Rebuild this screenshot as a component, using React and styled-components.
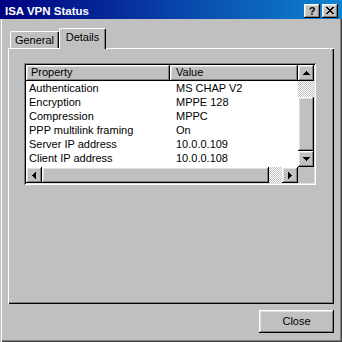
import React from 'react';
import styled, { createGlobalStyle } from 'styled-components';

const Global = createGlobalStyle`
  html, body { margin: 0; padding: 0; background: #c0c0c0; }
  body { font-family: "Liberation Sans", Arial, sans-serif; font-size: 11px; color: #000; }
  * { box-sizing: border-box; }
`;

const raised = `
  box-shadow: inset -1px -1px #000, inset 1px 1px #fff, inset -2px -2px #808080, inset 2px 2px #dfdfdf;
`;

const Window = styled.div`
  width: 342px;
  height: 342px;
  display: flex;
  flex-direction: column;
  background: #c0c0c0;
  box-shadow: inset 1px 0 #c0c0c0, inset 2px 0 #fff, inset -1px -1px #404040, inset -2px -2px #808080;
`;

const TitleBar = styled.div`
  height: 19px;
  display: flex;
  align-items: flex-end;
  justify-content: space-between;
  padding: 0 4px 1px 5px;
  background: linear-gradient(to right, #000080, #1084d0);
`;

const Title = styled.div`
  color: #fff;
  font-weight: bold;
  font-size: 11.5px;
  line-height: 14px;
`;

const TitleButtons = styled.div`
  display: flex;
  gap: 2px;
`;

const TitleButton = styled.div`
  width: 16px;
  height: 14px;
  background: #c0c0c0;
  ${raised}
  display: flex;
  align-items: center;
  justify-content: center;
  font-weight: bold;
  font-size: 11px;
  line-height: 12px;
  padding-bottom: 1px;
`;

const Body = styled.div`
  flex: 1;
  display: flex;
  flex-direction: column;
  padding: 9px 8px 0 8px;
`;

const TabStrip = styled.div`
  display: flex;
  align-items: flex-end;
  height: 20px;
  padding-left: 2px;
`;

const Tab = styled.div`
  position: relative;
  z-index: 1;
  width: ${(p) => p.$w}px;
  height: ${(p) => (p.$active ? 21 : 17)}px;
  margin-bottom: ${(p) => (p.$active ? -1 : 0)}px;
  background: #c0c0c0;
  border-top: 1px solid #fff;
  border-left: 1px solid #fff;
  border-right: 1px solid #000;
  border-radius: 2px 2px 0 0;
  box-shadow: inset -1px 0 #808080;
  text-align: center;
  padding-top: 2px;
  line-height: 13px;
`;

const Panel = styled.div`
  height: 256px;
  background: #c0c0c0;
  box-shadow: inset 1px 1px #fff, inset -1px -1px #000, inset -2px -2px #808080;
  padding: 15px 0 0 16px;
`;

const ListView = styled.div`
  width: 292px;
  height: 122px;
  padding: 2px;
  background: #fff;
  box-shadow: inset 1px 1px #808080, inset -1px -1px #fff, inset 2px 2px #000, inset -2px -2px #dfdfdf;
  display: grid;
  grid-template-columns: 1fr 16px;
  grid-template-rows: 1fr 16px;
`;

const Content = styled.div`
  overflow: hidden;
  background: #fff;
`;

const HeaderRow = styled.div`
  display: grid;
  grid-template-columns: 144px 1fr;
  height: 16px;
`;

const HeaderCell = styled.div`
  background: #c0c0c0;
  ${raised}
  padding-left: ${(p) => p.$pad}px;
  line-height: 15px;
`;

const Row = styled.div`
  display: grid;
  grid-template-columns: 144px 1fr;
  height: 14px;
  line-height: 14px;
`;

const Cell = styled.div`
  padding-left: ${(p) => p.$pad}px;
  white-space: nowrap;
`;

const VScroll = styled.div`
  display: flex;
  flex-direction: column;
  background: #c0c0c0;
`;

const HScroll = styled.div`
  display: flex;
  background: #c0c0c0;
`;

const ArrowButton = styled.div`
  width: 16px;
  height: 16px;
  flex: none;
  background: #c0c0c0;
  ${raised}
  display: flex;
  align-items: center;
  justify-content: center;
`;

const Track = styled.div`
  flex: ${(p) => (p.$size ? 'none' : '1')};
  ${(p) => (p.$vertical ? 'height' : 'width')}: ${(p) => (p.$size ? `${p.$size}px` : 'auto')};
  background: repeating-conic-gradient(#c0c0c0 0 25%, #fff 0 50%) 0 0 / 2px 2px;
`;

const Thumb = styled.div`
  flex: ${(p) => (p.$size ? 'none' : '1')};
  ${(p) => (p.$vertical ? 'height' : 'width')}: ${(p) => (p.$size ? `${p.$size}px` : 'auto')};
  background: #c0c0c0;
  ${raised}
`;

const Corner = styled.div`
  background: #c0c0c0;
`;

const Footer = styled.div`
  display: flex;
  justify-content: flex-end;
  padding-top: 6px;
`;

const Button = styled.div`
  width: 75px;
  height: 23px;
  background: #c0c0c0;
  ${raised}
  display: flex;
  align-items: center;
  justify-content: center;
  line-height: 13px;
`;

const Arrow = ({ dir }) => {
  const vertical = dir === 'up' || dir === 'down';
  if (vertical) {
    const d = dir === 'up'
      ? 'M3 0h1v1h-1zM2 1h3v1h-3zM1 2h5v1h-5zM0 3h7v1h-7z'
      : 'M0 0h7v1h-7zM1 1h5v1h-5zM2 2h3v1h-3zM3 3h1v1h-1z';
    return (
      <svg width="7" height="4" viewBox="0 0 7 4" shapeRendering="crispEdges">
        <path d={d} fill="#000" />
      </svg>
    );
  }
  const d = dir === 'left'
    ? 'M0 3h1v1h-1zM1 2h1v3h-1zM2 1h1v5h-1zM3 0h1v7h-1z'
    : 'M0 0h1v7h-1zM1 1h1v5h-1zM2 2h1v3h-1zM3 3h1v1h-1z';
  return (
    <svg width="4" height="7" viewBox="0 0 4 7" shapeRendering="crispEdges">
      <path d={d} fill="#000" />
    </svg>
  );
};

const CloseGlyph = () => (
  <svg width="8" height="7" viewBox="0 0 8 7" shapeRendering="crispEdges">
    <path
      d="M0 0h2v1h-2zM6 0h2v1h-2zM1 1h2v1h-2zM5 1h2v1h-2zM2 2h4v1h-4zM3 3h2v1h-2zM2 4h4v1h-4zM1 5h2v1h-2zM5 5h2v1h-2zM0 6h2v1h-2zM6 6h2v1h-2z"
      fill="#000"
    />
  </svg>
);

const rows = [
  ['Authentication', 'MS CHAP V2'],
  ['Encryption', 'MPPE 128'],
  ['Compression', 'MPPC'],
  ['PPP multilink framing', 'On'],
  ['Server IP address', '10.0.0.109'],
  ['Client IP address', '10.0.0.108'],
];

export default function App() {
  return (
    <>
      <Global />
      <Window>
        <TitleBar>
          <Title>ISA VPN Status</Title>
          <TitleButtons>
            <TitleButton>?</TitleButton>
            <TitleButton>
              <CloseGlyph />
            </TitleButton>
          </TitleButtons>
        </TitleBar>
        <Body>
          <TabStrip>
            <Tab $w={49}>General</Tab>
            <Tab $w={47} $active>Details</Tab>
          </TabStrip>
          <Panel>
            <ListView>
              <Content>
                <HeaderRow>
                  <HeaderCell $pad={5}>Property</HeaderCell>
                  <HeaderCell $pad={6}>Value</HeaderCell>
                </HeaderRow>
                {rows.map(([k, v]) => (
                  <Row key={k}>
                    <Cell $pad={3}>{k}</Cell>
                    <Cell $pad={6}>{v}</Cell>
                  </Row>
                ))}
              </Content>
              <VScroll>
                <ArrowButton><Arrow dir="up" /></ArrowButton>
                <Track $vertical $size={16} />
                <Thumb $vertical />
                <ArrowButton><Arrow dir="down" /></ArrowButton>
              </VScroll>
              <HScroll>
                <ArrowButton><Arrow dir="left" /></ArrowButton>
                <Thumb $size={227} />
                <Track />
                <ArrowButton><Arrow dir="right" /></ArrowButton>
              </HScroll>
              <Corner />
            </ListView>
          </Panel>
          <Footer>
            <Button>Close</Button>
          </Footer>
        </Body>
      </Window>
    </>
  );
}
